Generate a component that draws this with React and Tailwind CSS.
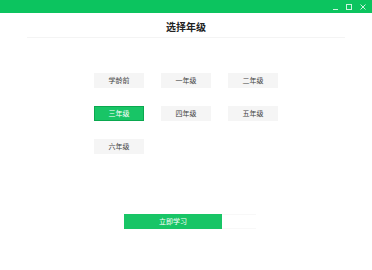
import { useState } from "react";

const grades = ["学龄前", "一年级", "二年级", "三年级", "四年级", "五年级", "六年级"];

export default function App() {
  const [picked, setPicked] = useState("三年级");

  return (
    <div
      className="w-[372px] h-[270px] bg-white overflow-hidden flex flex-col"
      style={{ fontFamily: '"Noto Sans CJK SC", "Noto Sans", sans-serif' }}
    >
      {/* title bar */}
      <div className="h-[13px] bg-[#0cc45f] flex items-center justify-end pr-[6px] gap-[8px] shrink-0">
        <span className="block w-[5px] h-px bg-white/80 mt-[5px]" />
        <span className="block w-[6px] h-[6px] border border-white/80" />
        <svg width="6" height="6" viewBox="0 0 6 6" className="opacity-80">
          <path d="M0.5 0.5 L5.5 5.5 M5.5 0.5 L0.5 5.5" stroke="#fff" strokeWidth="1" />
        </svg>
      </div>

      <div className="mx-[27px] h-[25px] border-b border-[#f4f4f4] flex items-center justify-center shrink-0">
        <h1 className="text-[10px] leading-none font-bold text-[#222] pt-[4px]">选择年级</h1>
      </div>

      <div className="pl-[94px] pt-[35px] grid grid-cols-[50px_50px_50px] gap-x-[17px] gap-y-[18px] shrink-0">
        {grades.map((g) => (
          <button
            key={g}
            onClick={() => setPicked(g)}
            className={
              picked === g
                ? "h-[15px] bg-[#18c566] border border-[#0aa84f] text-white text-[7px] leading-none flex items-center justify-center"
                : "h-[15px] bg-[#f5f5f5] text-[#444] text-[7px] leading-none flex items-center justify-center"
            }
          >
            {g}
          </button>
        ))}
      </div>

      <div className="pl-[124px] pt-[60px] flex shrink-0">
        <button className="w-[98px] h-[15px] bg-[#18c566] text-white text-[7px] leading-none flex items-center justify-center">
          立即学习
        </button>
        <div className="w-[34px] h-[15px] border-y border-[#f8f8f8]" />
      </div>
    </div>
  );
}
